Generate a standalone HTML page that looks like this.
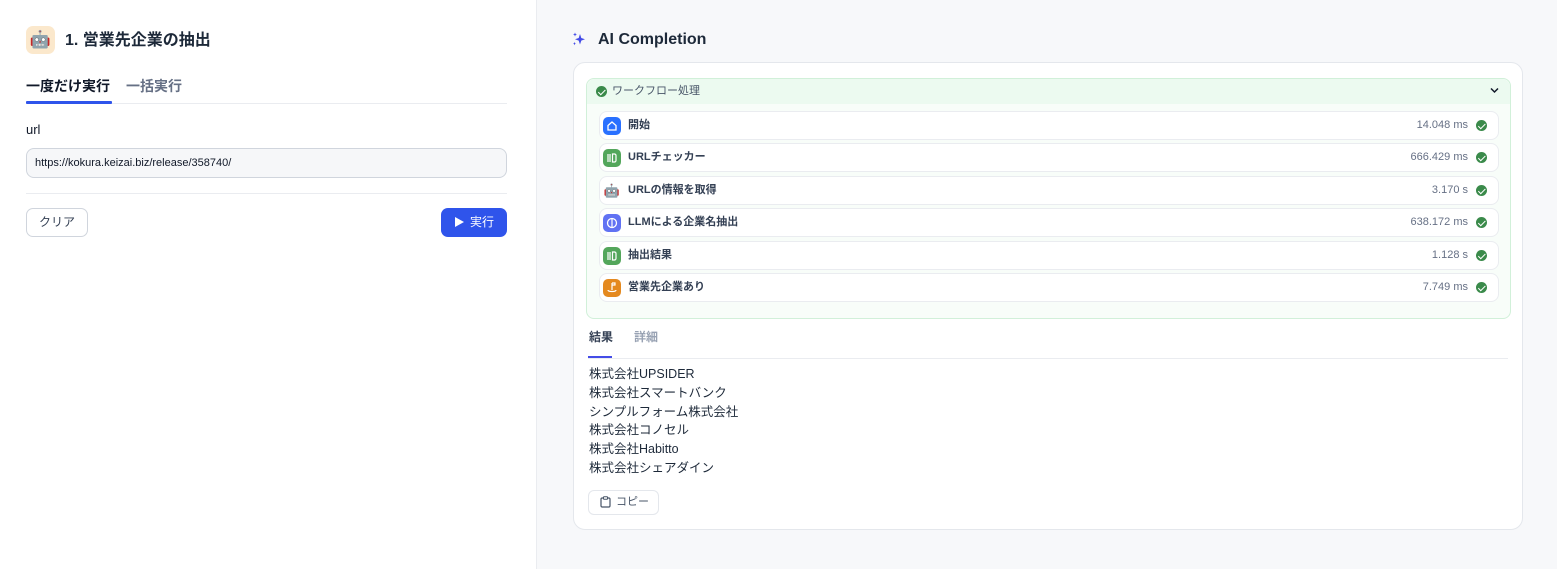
<!DOCTYPE html>
<html><head><meta charset="utf-8"><style>
*{box-sizing:border-box;margin:0;padding:0}
body{width:1557px;height:569px;overflow:hidden;font-family:"Liberation Sans","Noto Sans CJK JP",sans-serif;color:#1d2939;background:#f7f8fa;position:relative}
.left{position:absolute;left:0;top:0;width:537px;height:569px;background:#fff;border-right:1px solid #eaecf0}
.abs{position:absolute}
.row{position:absolute;left:12px;width:900px;height:29px;background:#fff;border:1px solid #eaecf0;border-radius:8px;font-size:11px;font-weight:bold;color:#344054;display:flex;align-items:center}
.row .ic{position:absolute;left:3px;top:5px;width:18px;height:18px;border-radius:5px}
.row .t{position:absolute;left:28px;top:6px;line-height:15px}
.row .v{position:absolute;right:30px;top:6px;line-height:15px;font-weight:normal;color:#667085}
.chk{position:absolute;width:11px;height:11px;border-radius:50%;background:#3a8a4a}
.chk:after{content:"";position:absolute;left:3.5px;top:1.5px;width:3px;height:5.5px;border:solid #fff;border-width:0 1.5px 1.5px 0;transform:rotate(45deg)}
.row .chk{right:11px;top:8px}
</style></head><body>
<div class="left">
 <div class="abs" style="left:26px;top:26px;width:29px;height:28px;border-radius:7px;background:#fbe8cc;font-size:17px;text-align:center;line-height:28px;overflow:hidden">🤖</div>
 <div class="abs" style="left:65px;top:31px;font-size:16px;line-height:20px;font-weight:bold;color:#1d2939">1. 営業先企業の抽出</div>
 <div class="abs" style="left:26px;top:77px;font-size:14px;line-height:18px;font-weight:bold;color:#101828">一度だけ実行</div>
 <div class="abs" style="left:126px;top:77px;font-size:14px;line-height:18px;font-weight:bold;color:#667085">一括実行</div>
 <div class="abs" style="left:26px;top:103px;width:481px;height:1px;background:#eaecf0"></div>
 <div class="abs" style="left:26px;top:101px;width:86px;height:3px;background:#2f54eb;border-radius:1px"></div>
 <div class="abs" style="left:26px;top:122px;font-size:13px;line-height:16px;color:#101828">url</div>
 <div class="abs" style="left:26px;top:148px;width:481px;height:30px;border:1px solid #d0d5dd;border-radius:8px;background:#f6f7f9;font-size:11px;line-height:28px;padding-left:8px;color:#101828">https://kokura.keizai.biz/release/358740/</div>
 <div class="abs" style="left:26px;top:193px;width:481px;height:1px;background:#eaecf0"></div>
 <div class="abs" style="left:26px;top:208px;width:62px;height:29px;border:1px solid #d0d5dd;border-radius:7px;font-size:12px;text-align:center;line-height:27px;color:#344054">クリア</div>
 <div class="abs" style="left:441px;top:208px;width:66px;height:29px;border-radius:7px;background:#2f54eb;font-size:12px;color:#fff;line-height:29px;padding-left:14px"><span style="display:inline-block;width:0;height:0;border-left:9px solid #fff;border-top:5.5px solid transparent;border-bottom:5.5px solid transparent;vertical-align:-1px;margin-right:6px"></span>実行</div>
</div>
<svg class="abs" style="left:571px;top:31px" width="16" height="16" viewBox="0 0 16 16"><path d="M9 3 L10.3 7 L14 8.3 L10.3 9.6 L9 13.5 L7.7 9.6 L4 8.3 L7.7 7Z" fill="#444ce7"/><path d="M4 1.5 L4.6 3 L6 3.5 L4.6 4 L4 5.5 L3.4 4 L2 3.5 L3.4 3Z" fill="#444ce7"/><path d="M3.5 11 L4 12.2 L5 12.6 L4 13 L3.5 14.2 L3 13 L2 12.6 L3 12.2Z" fill="#444ce7"/></svg>
<div class="abs" style="left:598px;top:30px;font-size:16px;line-height:20px;font-weight:bold;color:#1d2939">AI Completion</div>
<div class="abs" style="left:573px;top:62px;width:950px;height:468px;background:#fff;border:1px solid #e4e7ec;border-radius:12px"></div>
<div class="abs" style="left:586px;top:78px;width:925px;height:241px;border:1px solid #d1f0d9;border-radius:8px;background:#f8fdf9">
 <div class="abs" style="left:0;top:0;width:923px;height:25px;background:#ecfaf0;border-radius:8px 8px 0 0"></div>
 <div class="chk" style="left:9px;top:7px"></div>
 <div class="abs" style="left:25px;top:5px;font-size:11px;line-height:14px;color:#475467">ワークフロー処理</div>
 <svg class="abs" style="left:903px;top:8px" width="9" height="7" viewBox="0 0 9 7"><path d="M1 1.5 L4.5 5 L8 1.5" fill="none" stroke="#101828" stroke-width="1.5"/></svg>
 <div class="row" style="top:32px"><div class="ic" style="background:#2970ff"><svg width="18" height="18" viewBox="0 0 18 18"><path d="M5 8.5 L9 5 L13 8.5 V13 H5Z" fill="none" stroke="#fff" stroke-width="1.3"/></svg></div><span class="t">開始</span><span class="v">14.048 ms</span><div class="chk"></div></div>
 <div class="row" style="top:64px"><div class="ic" style="background:#53a65b"><svg width="18" height="18" viewBox="0 0 18 18"><path d="M5 5v8M7 5v8M9.5 5h2a1.5 1.5 0 0 1 1.5 1.5v5a1.5 1.5 0 0 1-1.5 1.5h-2Z" fill="none" stroke="#fff" stroke-width="1.2"/></svg></div><span class="t">URLチェッカー</span><span class="v">666.429 ms</span><div class="chk"></div></div>
 <div class="row" style="top:97px"><div class="ic" style="font-size:13px;line-height:18px;text-align:center;overflow:hidden">🤖</div><span class="t">URLの情報を取得</span><span class="v">3.170 s</span><div class="chk"></div></div>
 <div class="row" style="top:129px"><div class="ic" style="background:#6172f3"><svg width="18" height="18" viewBox="0 0 18 18"><circle cx="9" cy="9" r="4.5" fill="none" stroke="#fff" stroke-width="1.3"/><path d="M9 5v8" stroke="#fff" stroke-width="1.2"/></svg></div><span class="t">LLMによる企業名抽出</span><span class="v">638.172 ms</span><div class="chk"></div></div>
 <div class="row" style="top:162px"><div class="ic" style="background:#53a65b"><svg width="18" height="18" viewBox="0 0 18 18"><path d="M5 5v8M7 5v8M9.5 5h2a1.5 1.5 0 0 1 1.5 1.5v5a1.5 1.5 0 0 1-1.5 1.5h-2Z" fill="none" stroke="#fff" stroke-width="1.2"/></svg></div><span class="t">抽出結果</span><span class="v">1.128 s</span><div class="chk"></div></div>
 <div class="row" style="top:194px"><div class="ic" style="background:#e4891f"><svg width="18" height="18" viewBox="0 0 18 18"><path d="M9 4v7M9 4h3v2H9M5 11c0 2 8 2 8 0" fill="none" stroke="#fff" stroke-width="1.2"/></svg></div><span class="t">営業先企業あり</span><span class="v">7.749 ms</span><div class="chk"></div></div>
</div>
<div class="abs" style="left:589px;top:330px;font-size:12px;line-height:15px;font-weight:bold;color:#344054">結果</div>
<div class="abs" style="left:634px;top:330px;font-size:12px;line-height:15px;font-weight:bold;color:#98a2b3">詳細</div>
<div class="abs" style="left:588px;top:358px;width:920px;height:1px;background:#eaecf0"></div>
<div class="abs" style="left:588px;top:356px;width:24px;height:2px;background:#444ce7"></div>
<div class="abs" style="left:589px;top:365px;font-size:12.5px;line-height:18.8px;color:#1d2939">株式会社UPSIDER<br>株式会社スマートバンク<br>シンプルフォーム株式会社<br>株式会社コノセル<br>株式会社Habitto<br>株式会社シェアダイン</div>
<div class="abs" style="left:588px;top:490px;width:71px;height:25px;border:1px solid #e4e7ec;border-radius:6px;font-size:11px;color:#475467;line-height:23px;padding-left:27px">コピー</div>
<svg class="abs" style="left:600px;top:496px" width="11" height="12" viewBox="0 0 11 12"><rect x="1" y="2" width="9" height="9" rx="1.2" fill="none" stroke="#475467" stroke-width="1.2"/><rect x="3.5" y="0.8" width="4" height="2.4" rx=".5" fill="#fff" stroke="#475467" stroke-width="1"/></svg>
</body></html>
